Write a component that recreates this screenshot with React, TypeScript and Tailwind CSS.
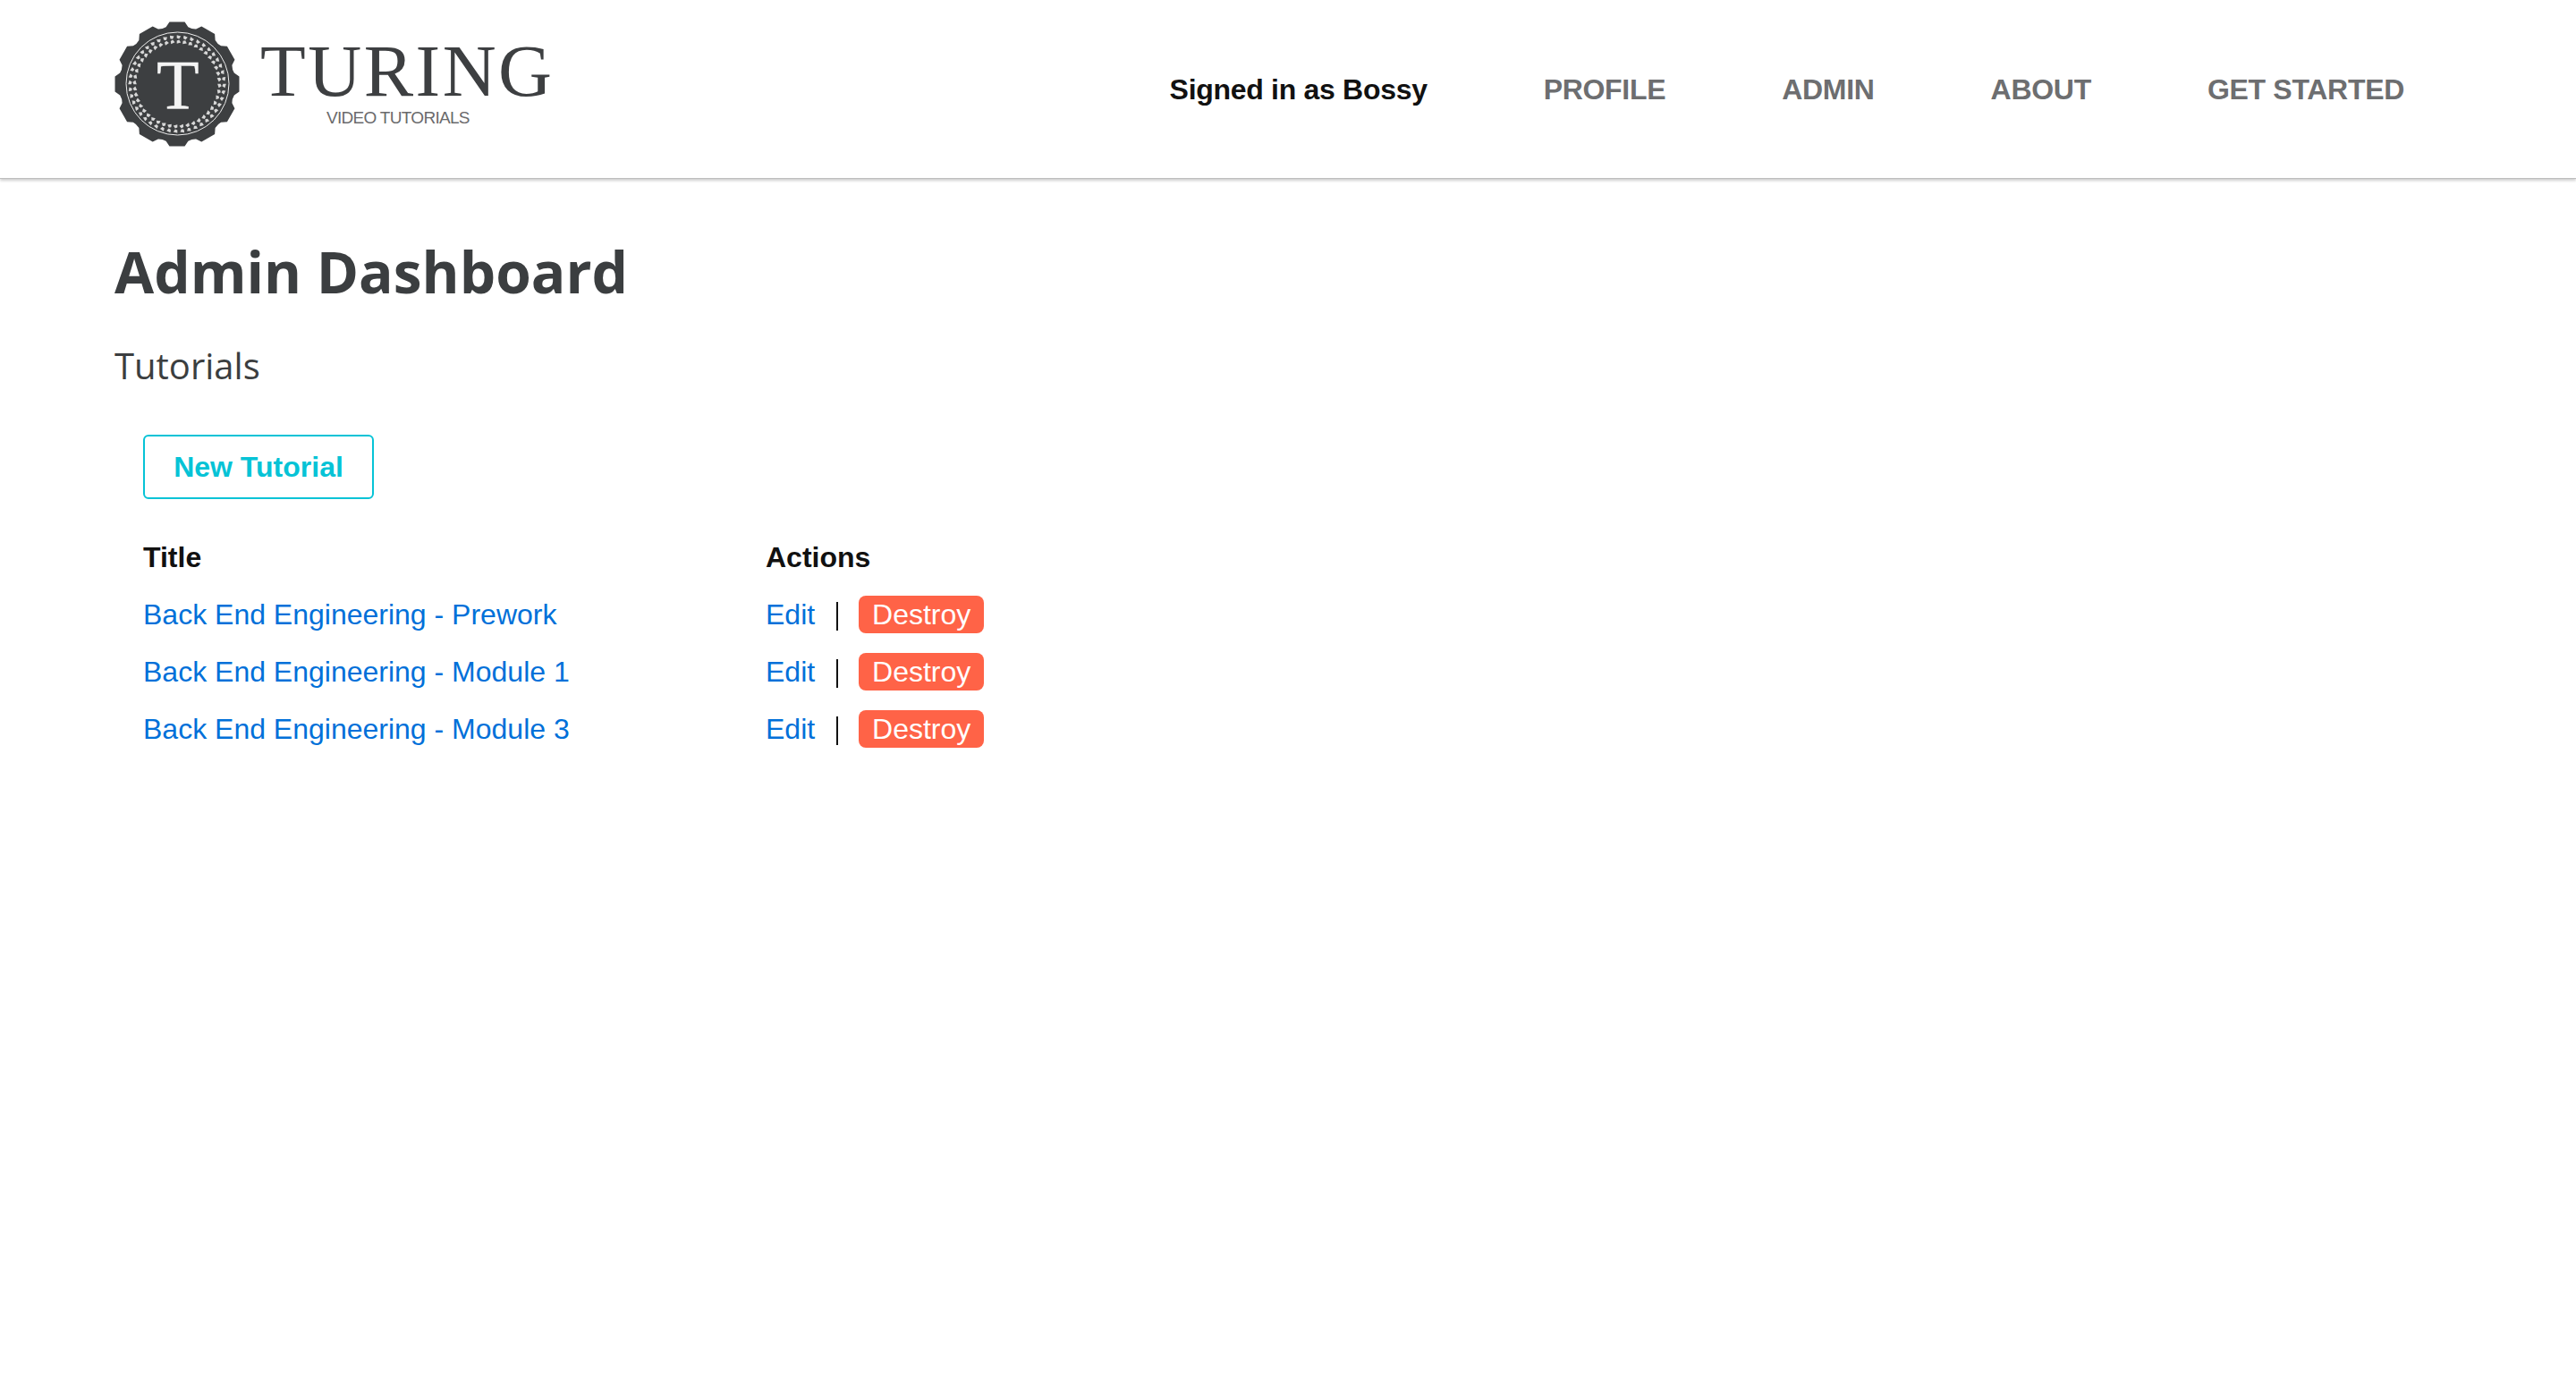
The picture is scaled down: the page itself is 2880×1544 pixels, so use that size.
const sans = "font-['Liberation_Sans',Arial,sans-serif]";

const tutorials = ['Back End Engineering - Prework', 'Back End Engineering - Module 1', 'Back End Engineering - Module 3'];
const navLinks = ['PROFILE', 'ADMIN', 'ABOUT', 'GET STARTED'];

// 12 flat teeth with rounded valleys between them
function gearPath() {
  const cx = 70;
  const cy = 70;
  const pt = (r: number, deg: number) => {
    const a = (deg * Math.PI) / 180;
    return `${(cx + r * Math.cos(a)).toFixed(2)} ${(cy + r * Math.sin(a)).toFixed(2)}`;
  };
  let d = '';
  for (let i = 0; i < 12; i++) {
    const c = i * 30;
    d += `${i === 0 ? 'M' : 'L'}${pt(70, c - 7)} L${pt(70, c + 7)} L${pt(65, c + 11)} Q${pt(63.5, c + 15)} ${pt(65, c + 19)} L${pt(70, c + 23)} `;
  }
  return d + 'Z';
}

function Logo() {
  const leaves = Array.from({ length: 44 }, (_, i) => (i * 360) / 44);
  return (
    <svg width="140" height="140" viewBox="0 0 140 140" className="shrink-0">
      <path d={gearPath()} fill="#3d3f41" />
      <circle cx="70.5" cy="69.5" r="57.5" fill="none" stroke="#ececec" strokeWidth="1" />
      {leaves.map((deg) => (
        <g key={deg} transform={`rotate(${deg} 70 70)`}>
          <path d="M69.7 15.2 L74.2 16.6 L72.2 19.6 L69.7 18.6 Z" fill="#d8d8d8" />
          <path d="M69.7 24.8 L74.2 23.4 L72.2 20.4 L69.7 21.4 Z" fill="#d8d8d8" />
        </g>
      ))}
      <text x="70.8" y="97" textAnchor="middle" fill="#f4f4f4" stroke="#f4f4f4" strokeWidth="0.4" fontSize="78" fontFamily="'Liberation Serif', serif">
        T
      </text>
    </svg>
  );
}

export default function App() {
  return (
    <div className="min-h-[1544px] bg-white">
      <header className="h-[200px] flex items-start justify-between pl-[128px] pr-[192px] bg-white border-b border-[#bdbdbd] shadow-[0_2px_3px_rgba(0,0,0,0.2)]">
        <div className="flex items-start gap-[23px] pt-[24px]">
          <Logo />
          <div className="flex flex-col pt-[20px]">
            <span className="font-['Liberation_Serif',serif] text-[83px] leading-[70px] tracking-[2.5px] text-[#3d3f41]">TURING</span>
            <span className={`${sans} text-[19px] leading-[24px] tracking-[-0.7px] text-[#6a6a6c] mt-[6px] ml-[74px]`}>VIDEO TUTORIALS</span>
          </div>
        </div>
        <nav className={`${sans} flex items-center gap-[130px] pt-[82px] text-[32px] leading-[37px] font-bold tracking-[-0.3px]`}>
          <span className="text-[#111111]">Signed in as Bossy</span>
          {navLinks.map((link) => (
            <a key={link} className="text-[#6d6e70]">
              {link}
            </a>
          ))}
        </nav>
      </header>
      <main className="pl-[128px] pt-[64px]">
        <h1 className="font-['Open_Sans',sans-serif] text-[64px] leading-[80px] font-bold text-[#3b3e40]">Admin Dashboard</h1>
        <h2 className="font-['Open_Sans',sans-serif] text-[40px] leading-[54px] text-[#3b3e40] mt-[38px]">Tutorials</h2>
        <div className={`${sans} pl-[32px] mt-[50px]`}>
          <a className="inline-flex items-center justify-center w-[258px] h-[72px] border-2 border-[#06c3d6] rounded-[6px] text-[32px] font-bold text-[#06c3d6]">New Tutorial</a>
          <div className="mt-[33px] grid grid-cols-[696px_1fr] auto-rows-[64px] items-center text-[32px] leading-[37px]">
            <div className="font-bold text-[#111111]">Title</div>
            <div className="font-bold text-[#111111]">Actions</div>
            {tutorials.map((title) => [
              <a key={title} className="text-[#0070d9]">{title}</a>,
              <div key={`${title}-actions`} className="flex items-center">
                <a className="text-[#0070d9]">Edit</a>
                <span className="w-[2px] h-[32px] bg-[#111111] mt-[4px] ml-[24px] mr-[23px]" />
                <a className="w-[140px] h-[42px] flex items-center justify-center rounded-[8px] bg-[#ff6347] text-white">Destroy</a>
              </div>,
            ])}
          </div>
        </div>
      </main>
    </div>
  );
}
